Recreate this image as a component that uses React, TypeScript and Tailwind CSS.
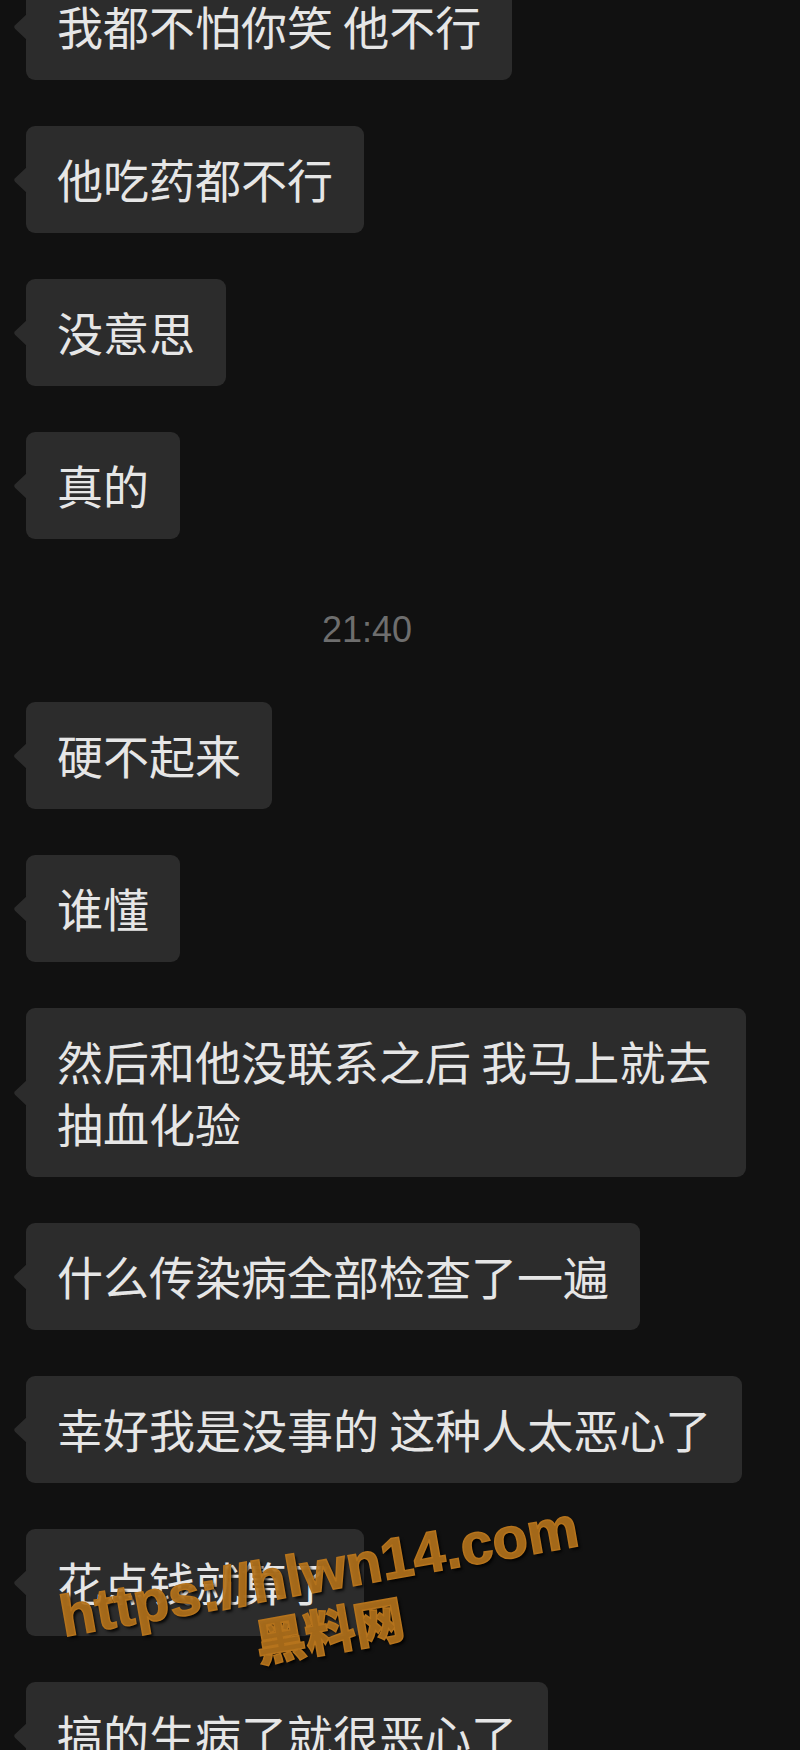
import React from 'react';

type Item = { kind: 'msg'; text: string } | { kind: 'time'; text: string };

const items: Item[] = [
  { kind: 'msg', text: '我都不怕你笑 他不行' },
  { kind: 'msg', text: '他吃药都不行' },
  { kind: 'msg', text: '没意思' },
  { kind: 'msg', text: '真的' },
  { kind: 'time', text: '21:40' },
  { kind: 'msg', text: '硬不起来' },
  { kind: 'msg', text: '谁懂' },
  { kind: 'msg', text: '然后和他没联系之后 我马上就去抽血化验' },
  { kind: 'msg', text: '什么传染病全部检查了一遍' },
  { kind: 'msg', text: '幸好我是没事的 这种人太恶心了' },
  { kind: 'msg', text: '花点钱就算了' },
  { kind: 'msg', text: '搞的生病了就很恶心了' },
];

const Bubble = ({ text }: { text: string }) => (
  <div className="relative ml-[26px] w-fit max-w-[720px] rounded-[9px] bg-[#2c2c2c] px-[31px] pt-[21px] pb-[24px] text-[46px] leading-[62px] text-[#e6e6e6]">
    {/* tail */}
    <svg className="absolute -left-[14px] top-1/2 -translate-y-1/2" width="16" height="30" viewBox="0 0 16 30">
      <path d="M16 1 L3 13.2 Q1.2 15 3 16.8 L16 29 Z" fill="#2c2c2c" />
    </svg>
    {text}
  </div>
);

export default function App() {
  return (
    <div className="relative h-[1750px] w-[800px] overflow-hidden bg-[#111111] font-['Noto_Sans_CJK_SC',sans-serif]">
      <div className="-mt-[27px] flex flex-col items-start gap-[46px]">
        {items.map((it, i) =>
          it.kind === 'time' ? (
            <div key={i} className="self-stretch pt-[27px] pb-[8px] pr-[66px] text-center font-['Liberation_Sans',Arial,sans-serif] text-[36px] leading-[36px] text-[#6e6e6e]">
              {it.text}
            </div>
          ) : (
            <Bubble key={i} text={it.text} />
          )
        )}
      </div>

      {/* watermark */}
      <div className="pointer-events-none absolute left-[24px] top-[1542px] w-[600px] -rotate-[10deg] text-center font-bold text-[#b5731c]/90 [-webkit-text-stroke:1.5px_#b5731c] [text-shadow:2px_3px_3px_rgba(0,0,0,0.85)]">
        <div className="font-['Liberation_Sans',Arial,sans-serif] text-[58px] leading-[57px]">https://hlwn14.com</div>
        <div className="font-['Noto_Sans_CJK_SC',sans-serif] text-[50px] font-black leading-[58px]">黑料网</div>
      </div>
    </div>
  );
}
